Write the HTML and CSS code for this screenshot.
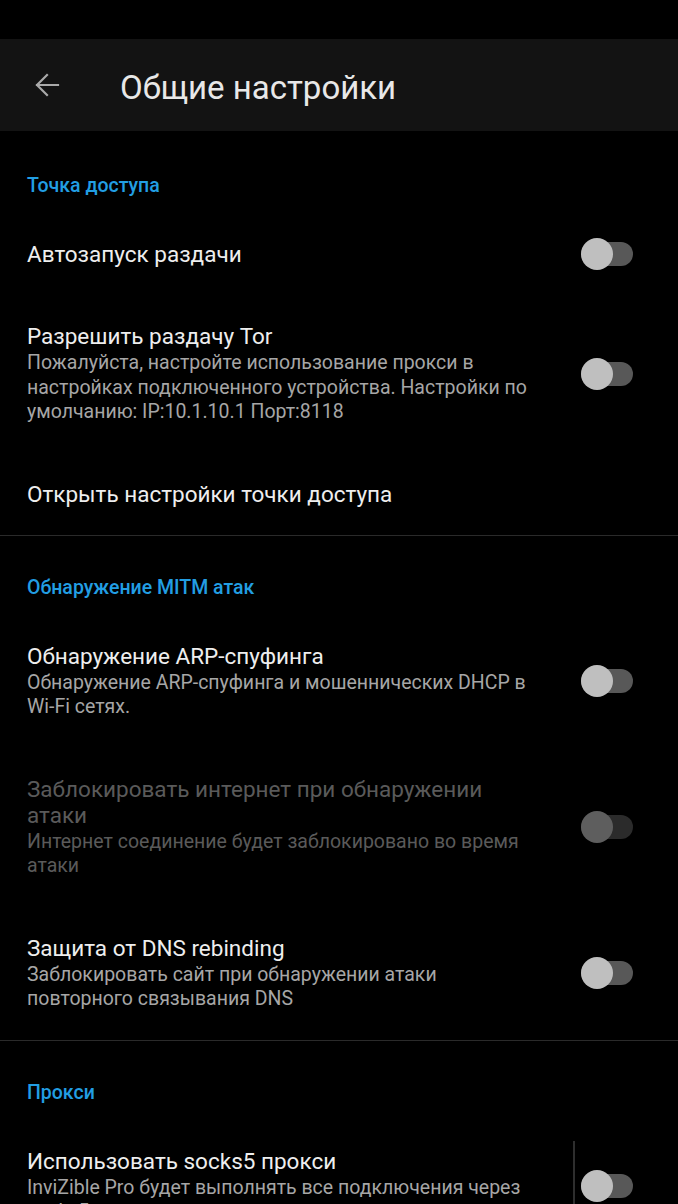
FILE: index.html
```html
<!DOCTYPE html>
<html lang="ru">
<head>
    <meta charset="UTF-8">
    <meta name="viewport" content="width=device-width, initial-scale=1.0">
    <title>Общие настройки</title>
    <link rel="stylesheet" href="styles.css">
</head>
<body>
    <div class="status-bar"></div>
    <div class="toolbar">
        <button class="back-button" aria-label="Назад">
            <svg width="28" height="28" viewBox="0 0 28 28">
                <path d="M25 14H4M14 4L4 14l10 10" fill="none" stroke="#a9a9a9" stroke-width="2.2" stroke-linecap="square"/>
            </svg>
        </button>
        <h1 class="toolbar-title">Общие настройки</h1>
    </div>

    <div class="settings">
        <div class="category">Точка доступа</div>
        <div class="pref">
            <div class="pref-text">
                <div class="pref-title">Автозапуск раздачи</div>
            </div>
            <div class="pref-widget"><span class="switch"></span></div>
        </div>
        <div class="pref">
            <div class="pref-text">
                <div class="pref-title">Разрешить раздачу Tor</div>
                <div class="pref-summary">Пожалуйста, настройте использование прокси в настройках подключенного устройства. Настройки по умолчанию: IP:10.1.10.1 Порт:8118</div>
            </div>
            <div class="pref-widget"><span class="switch"></span></div>
        </div>
        <div class="pref">
            <div class="pref-text">
                <div class="pref-title">Открыть настройки точки доступа</div>
            </div>
        </div>

        <div class="divider"></div>

        <div class="category">Обнаружение MITM атак</div>
        <div class="pref">
            <div class="pref-text">
                <div class="pref-title">Обнаружение ARP-спуфинга</div>
                <div class="pref-summary">Обнаружение ARP-спуфинга и мошеннических DHCP в <span class="nowrap">Wi-Fi</span> сетях.</div>
            </div>
            <div class="pref-widget"><span class="switch"></span></div>
        </div>
        <div class="pref disabled">
            <div class="pref-text">
                <div class="pref-title">Заблокировать интернет при обнаружении атаки</div>
                <div class="pref-summary">Интернет соединение будет заблокировано во время атаки</div>
            </div>
            <div class="pref-widget"><span class="switch"></span></div>
        </div>
        <div class="pref">
            <div class="pref-text">
                <div class="pref-title">Защита от DNS rebinding</div>
                <div class="pref-summary">Заблокировать сайт при обнаружении атаки повторного связывания DNS</div>
            </div>
            <div class="pref-widget"><span class="switch"></span></div>
        </div>

        <div class="divider"></div>

        <div class="category">Прокси</div>
        <div class="pref">
            <div class="pref-text">
                <div class="pref-title">Использовать socks5 прокси</div>
                <div class="pref-summary">InviZible Pro будет выполнять все подключения через socks5 прокси</div>
            </div>
            <div class="pref-widget split"><span class="widget-line"></span><span class="switch"></span></div>
        </div>
    </div>
</body>
</html>
```

FILE: styles.css
```css
body {
    margin: 0;
    background-color: #000;
    font-family: Roboto, "Noto Sans", sans-serif;
    color: #ededed;
    overflow: hidden;
}

.status-bar {
    height: 39px;
    background-color: #000;
}

.toolbar {
    display: flex;
    align-items: center;
    height: 92px;
    background-color: #131313;
}

.back-button {
    display: flex;
    align-items: center;
    justify-content: center;
    width: 28px;
    height: 28px;
    margin-left: 33px;
    margin-right: 59px;
    padding: 0;
    background: none;
    border: none;
}

.toolbar-title {
    margin: 4px 0 0;
    font-size: 33px;
    font-weight: 400;
    color: #e8e8e8;
}

.category {
    padding: 40px 27px 15px;
    line-height: 24px;
    font-size: 19.5px;
    font-weight: 500;
    color: #229ee3;
}

.category:first-child {
    padding-top: 43px;
}

.pref {
    display: flex;
    align-items: center;
    padding-left: 27px;
}

.pref-text {
    flex: 1;
    padding: 28px 0;
}

.pref-title {
    font-size: 22.5px;
    line-height: 26px;
    color: #eeeeee;
}

.pref-summary {
    margin-top: 2px;
    font-size: 19.5px;
    line-height: 24.5px;
    color: #a6a6a6;
}

.nowrap {
    white-space: nowrap;
}

.pref-widget {
    display: flex;
    align-items: center;
    width: 143px;
    padding-left: 46px;
    box-sizing: border-box;
}

.pref-widget.split {
    align-self: stretch;
    padding-left: 38px;
}

.widget-line {
    align-self: stretch;
    width: 2px;
    margin: 21px 6px 0 0;
    background-color: #2e2e2e;
}

.switch {
    position: relative;
    display: block;
    width: 52px;
    height: 24px;
    border-radius: 12px;
    background-color: #585858;
}

.switch::before {
    content: "";
    position: absolute;
    left: 0;
    top: -4px;
    width: 32px;
    height: 32px;
    border-radius: 50%;
    background-color: #bfbfbf;
}

.disabled .pref-title,
.disabled .pref-summary {
    color: #5a5a5a;
}

.disabled .switch {
    background-color: #2b2b2b;
}

.disabled .switch::before {
    background-color: #5e5e5e;
}

.divider {
    height: 1px;
    background-color: #2a2a2a;
}
```
